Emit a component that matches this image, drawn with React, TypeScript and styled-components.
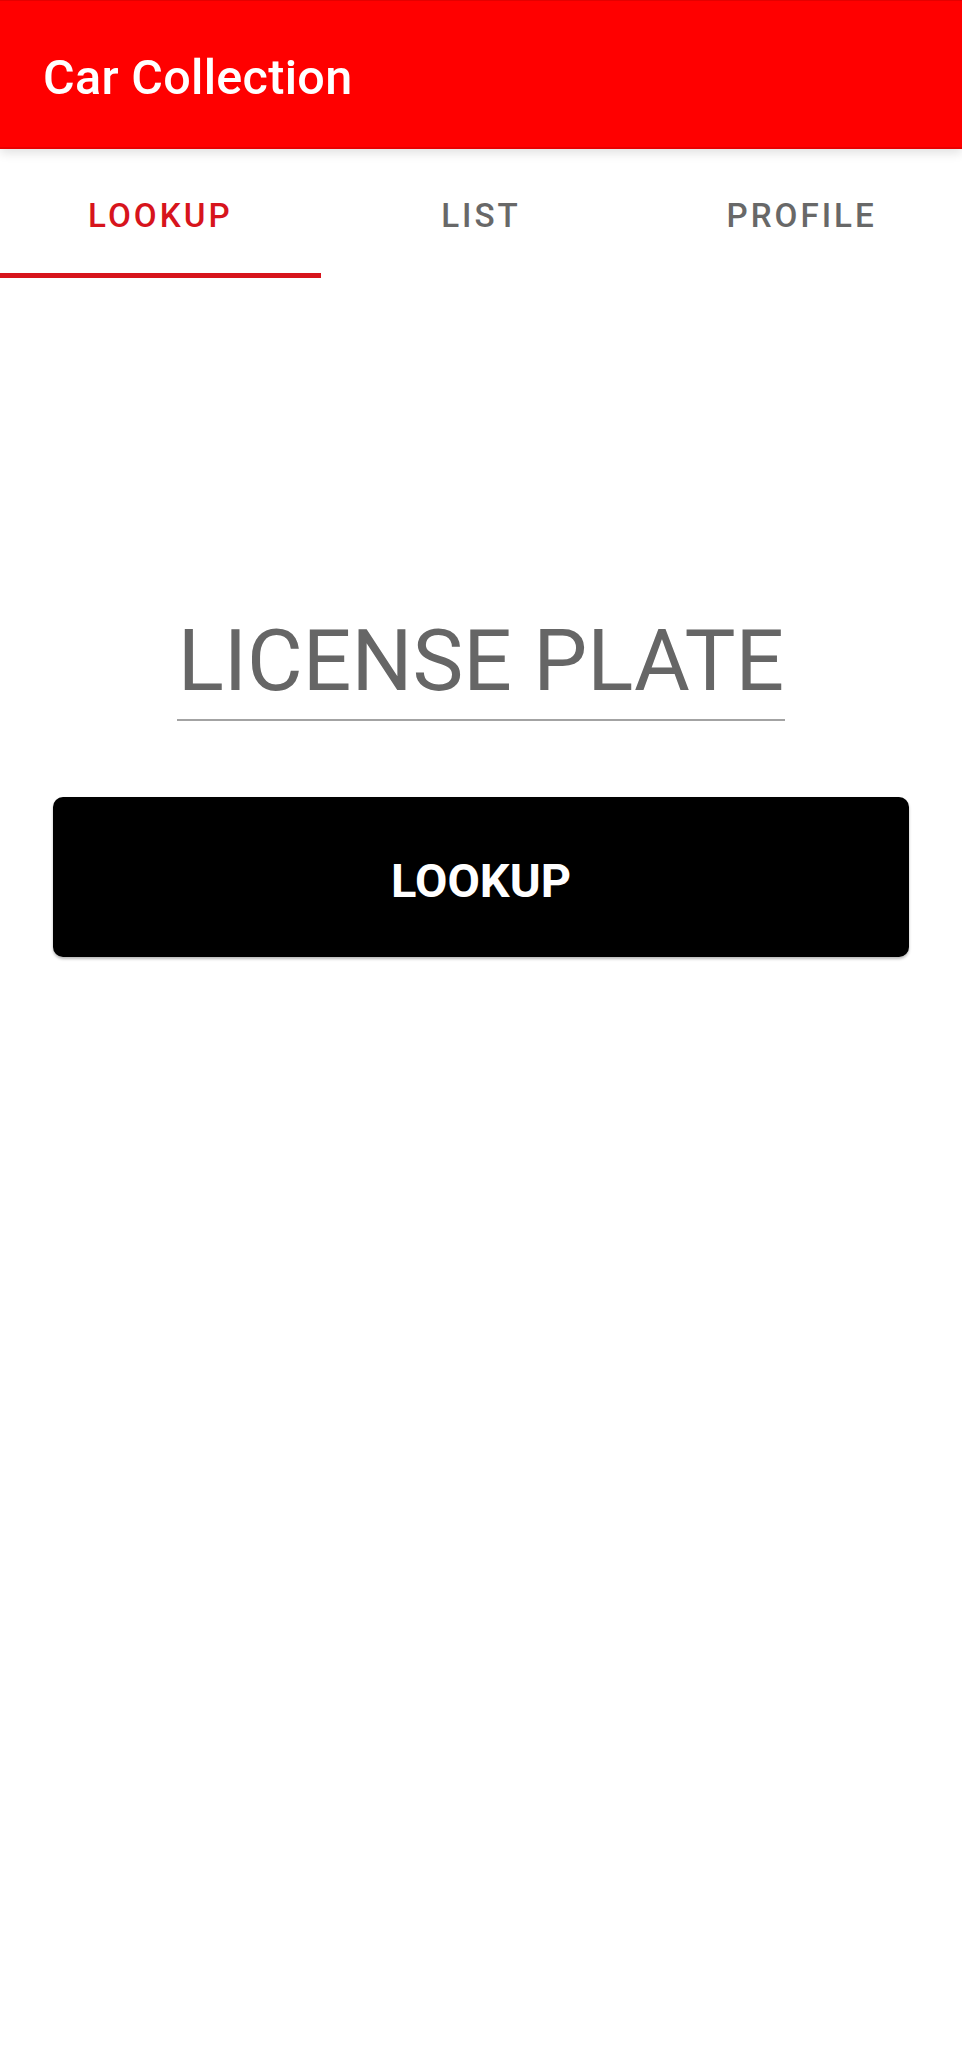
import React, { useState } from "react";
import styled, { createGlobalStyle } from "styled-components";

const Global = createGlobalStyle`
  html, body {
    margin: 0;
    padding: 0;
    background: #ffffff;
  }
  body {
    font-family: Roboto, "Noto Sans", "Liberation Sans", sans-serif;
    -webkit-font-smoothing: antialiased;
  }
  * { box-sizing: border-box; }
`;

const Page = styled.div`
  width: 962px;
  min-height: 2048px;
  background: #ffffff;
  display: flex;
  flex-direction: column;
`;

const AppBar = styled.header`
  position: relative;
  z-index: 2;
  height: 149px;
  padding: 53px 43px 0;
  background: #ff0000;
  border-top: 1px solid #e40000;
  border-bottom: 2px solid #e80000;
  box-shadow: 0 4px 10px rgba(0, 0, 0, 0.12);
`;

const Title = styled.h1`
  margin: 0;
  font-family: Roboto, "Liberation Sans", sans-serif;
  font-weight: 500;
  font-size: 48.5px;
  line-height: 1;
  color: #ffffff;
  letter-spacing: 0.3px;
`;

const TabBar = styled.nav`
  display: grid;
  grid-template-columns: repeat(3, 1fr);
  height: 129px;
  background: #ffffff;
`;

const Tab = styled.button<{ $active?: boolean }>`
  appearance: none;
  border: none;
  background: transparent;
  margin: 0;
  padding: 50px 0 0;
  height: 129px;
  display: flex;
  justify-content: center;
  align-items: flex-start;
  font-family: Roboto, "Liberation Sans", sans-serif;
  font-weight: 500;
  font-size: 33.2px;
  line-height: 1;
  letter-spacing: 3px;
  text-transform: uppercase;
  color: ${(p) => (p.$active ? "#d7141c" : "#686868")};
  border-bottom: 5px solid ${(p) => (p.$active ? "#d7141c" : "transparent")};
  cursor: pointer;
`;

const Content = styled.main`
  display: flex;
  flex-direction: column;
  align-items: center;
  padding: 340px 53px 0;
`;

const Field = styled.input`
  display: block;
  width: 608px;
  margin: 0;
  padding: 0 0 16px;
  border: none;
  border-bottom: 2px solid #a3a3a3;
  outline: none;
  background: transparent;
  font-family: Roboto, "Liberation Sans", sans-serif;
  font-weight: 400;
  font-size: 85.6px;
  line-height: 85px;
  height: 103px;
  text-align: center;
  color: #666666;

  &::placeholder {
    color: #666666;
    opacity: 1;
  }
`;

const PrimaryButton = styled.button`
  appearance: none;
  margin-top: 76px;
  width: 100%;
  height: 160px;
  padding-top: 8px;
  border: none;
  border-radius: 10px;
  background: #000000;
  box-shadow: 0 2px 3px rgba(0, 0, 0, 0.28);
  display: flex;
  align-items: center;
  justify-content: center;
  font-family: Roboto, "Liberation Sans", sans-serif;
  font-weight: 700;
  font-size: 47px;
  line-height: 1;
  color: #ffffff;
  text-transform: uppercase;
  cursor: pointer;
`;

const tabs = ["Lookup", "List", "Profile"];

export default function App() {
  const [active, setActive] = useState(0);
  const [plate, setPlate] = useState("");
  return (
    <Page>
      <Global />
      <AppBar>
        <Title>Car Collection</Title>
      </AppBar>
      <TabBar>
        {tabs.map((t, i) => (
          <Tab key={t} $active={i === active} onClick={() => setActive(i)}>
            {t}
          </Tab>
        ))}
      </TabBar>
      <Content>
        <Field
          placeholder="LICENSE PLATE"
          value={plate}
          onChange={(e) => setPlate(e.target.value)}
        />
        <PrimaryButton>Lookup</PrimaryButton>
      </Content>
    </Page>
  );
}
